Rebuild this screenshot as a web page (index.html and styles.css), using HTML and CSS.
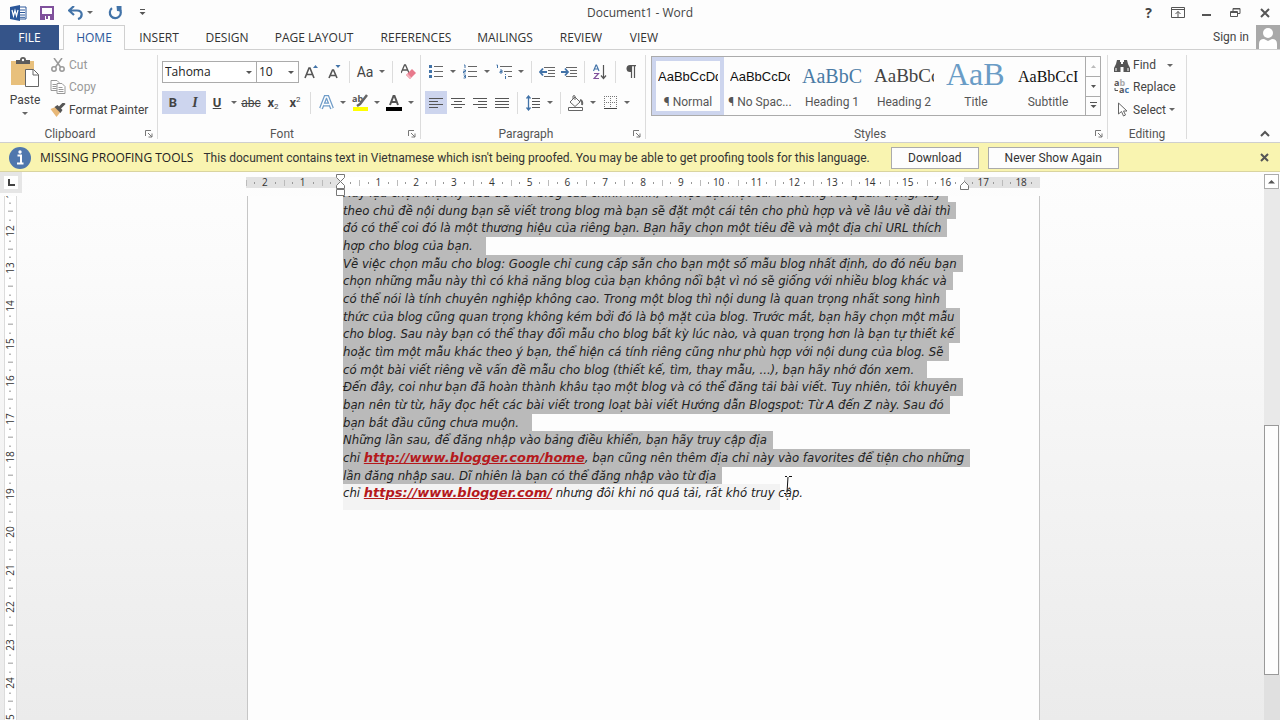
FILE: index.html
```html
<!DOCTYPE html>
<html lang="en">
<head>
<meta charset="utf-8">
<title>Document1 - Word</title>
<link rel="stylesheet" href="styles.css">
</head>
<body>
<div class="app">
<header class="titlebar">
  <div class="quick">
    <svg class="logo" width="17" height="16" viewBox="0 0 17 16" role="img" aria-label="Word"><path d="M8 2h8v12H8z" fill="#fff" stroke="#2b579a"/><path d="M10 5h5M10 7.500h5M10 10h5M10 12.300h5" stroke="#2b579a"/><path d="M0 2l10-2v16L0 14z" fill="#2b579a"/><path d="M2 5l1.500 6L5 5.500 6.500 11 8 5" fill="none" stroke="#fff" stroke-width="1.200"/></svg>
    <button aria-label="Save"><svg width="14" height="14" viewBox="0 0 14 14"><path d="M1 1h12v12H1z" fill="#fff" stroke="#80519c" stroke-width="2"/><path d="M1 8h12v5H1z" fill="#80519c"/><path d="M5 10h5v4H5z" fill="#fff"/><path d="M6 10h2v3H6z" fill="#80519c"/></svg></button>
    <button aria-label="Undo" class="undo"><svg width="16" height="14" viewBox="0 0 16 14"><path d="M6 0L1 4.500 6 9M1.500 4.500H9c6 0 6 7 1 8.500" fill="none" stroke="#4273a8" stroke-width="2.200"/></svg></button>
    <button class="arr" aria-label="Undo list"></button>
    <button aria-label="Repeat" class="redo"><svg width="15" height="14" viewBox="0 0 15 14"><path d="M4 2.200A5.500 5.500 0 1 0 11 2.500" fill="none" stroke="#4273a8" stroke-width="2.200"/><path d="M8.500 0h5v5.500L9 5z" fill="#4273a8"/></svg></button>
    <button aria-label="Customize"><svg width="7" height="7" viewBox="0 0 7 7"><path d="M1 .5h5" stroke="#555"/><path d="M.5 3h6l-3 3z" fill="#555"/></svg></button>
  </div>
  <h1>Document1 - Word</h1>
  <div class="window">
    <button aria-label="Help" class="help">?</button>
    <button aria-label="Ribbon display options"><svg width="14" height="11" viewBox="0 0 14 11" fill="none" stroke="#555"><path d="M.5.5h13v10H.5zM.5 2.500h13M7 10V4.500M4.500 7L7 4.500 9.500 7"/></svg></button>
    <button aria-label="Minimize"><svg width="10" height="10" viewBox="0 0 10 10"><path d="M0 7h9" stroke="#555" stroke-width="2"/></svg></button>
    <button aria-label="Restore"><svg width="11" height="11" viewBox="0 0 11 11" fill="none" stroke="#555"><path d="M.5 4.500h7v5h-7zM.5 5.500h7M3 4V1.500h7v5H8M3 2h7"/></svg></button>
    <button aria-label="Close"><svg width="10" height="10" viewBox="0 0 10 10"><path d="M1 1l8 8M9 1L1 9" stroke="#555" stroke-width="2"/></svg></button>
  </div>
</header>
<nav class="tabs">
  <button class="file">FILE</button>
  <button class="home">HOME</button>
  <button class="t3">INSERT</button>
  <button class="t4">DESIGN</button>
  <button class="t5">PAGE LAYOUT</button>
  <button class="t6">REFERENCES</button>
  <button class="t7">MAILINGS</button>
  <button class="t8">REVIEW</button>
  <button class="t9">VIEW</button>
  <a class="signin" href="#">Sign in</a>
  <svg class="avatar" width="24" height="24" viewBox="0 0 24 24" role="img" aria-label="Account"><path d="M0 0h24v24H0z" fill="#a9a9a9"/><circle cx="12" cy="8" r="5" fill="#fff"/><path d="M3 24v-5q0-5 5-5l4 2 4-2q5 0 5 5v5z" fill="#fff"/></svg>
</nav>
<section class="ribbon">
  <div class="group clip">
    <div class="body cliprow">
      <button class="paste"><svg width="30" height="31" viewBox="0 0 30 31"><path d="M1 4h23v24H1z" fill="#e8c07c"/><path d="M6 3h4q0-3 3-3t3 3h4v4H6z" fill="#5c5c5c"/><circle cx="13" cy="3" r="1.200" fill="#fff"/><path d="M15.500 12.500h8l5 5v12h-13z" fill="#fff" stroke="#666"/><path d="M23 12.500V18h5.500" fill="none" stroke="#666"/></svg><span>Paste</span><span class="tri"></span></button>
      <div class="cliplist">
        <button class="off"><svg width="14" height="14" viewBox="0 0 14 14" fill="none" stroke="#999" stroke-width="1.500"><path d="M3 0l6.500 9M11 0L4.500 9"/><circle cx="3" cy="11" r="2.200"/><circle cx="11" cy="11" r="2.200"/></svg>Cut</button>
        <button class="off"><svg width="15" height="14" viewBox="0 0 15 14" fill="#fff" stroke="#999"><path d="M.5.5h6l2 2v8h-8zM2 4.500h4M2 6.500h4M2 8.500h4"/><path d="M6.500 3.500h5l3 3v7h-8zM8 7.500h4M8 9.500h5M8 11.500h5"/></svg>Copy</button>
        <button><svg width="15" height="14" viewBox="0 0 15 14"><path d="M0 6l5-2 5 5-4 5z" fill="#e8b878"/><path d="M4 4l3-2 5 5-2 3z" fill="#555"/><path d="M8.500 5.500L14 0" stroke="#555" stroke-width="3"/></svg>Format Painter</button>
      </div>
    </div>
    <footer><span>Clipboard</span><button class="launch" aria-label="Clipboard settings"><svg width="8" height="8" viewBox="0 0 8 8" fill="none" stroke="#777"><path d="M.5 6V.5H6M3 3l4 4M7 3.500V7H3.500"/></svg></button></footer>
  </div>
  <div class="group font">
    <div class="body">
      <div class="row">
        <label class="combo face"><select aria-label="Font"><option>Tahoma</option></select></label>
        <label class="combo size"><select aria-label="Font size"><option>10</option></select></label>
        <button class="w24" aria-label="Grow font"><svg width="14" height="15" viewBox="0 0 14 15"><path d="M1 14L5 4h1l4 10M2.500 10.500h6" fill="none" stroke="#555" stroke-width="1.600"/><path d="M9 4l2.500-3L14 4z" fill="#4273a8"/></svg></button>
        <button class="w22" aria-label="Shrink font"><svg width="14" height="15" viewBox="0 0 14 15"><path d="M2 14L5.500 6h1L10 14M3.500 11.500h5" fill="none" stroke="#555" stroke-width="1.600"/><path d="M8.500 1h5L11 4z" fill="#4273a8"/></svg></button>
        <i class="sep"></i>
        <button class="w22 aa">Aa</button><button class="arr" aria-label="Change case"></button>
        <i class="sep"></i>
        <button class="w22" aria-label="Clear formatting"><svg width="15" height="16" viewBox="0 0 15 16"><path d="M0 9L3.500 1h1L8 9M1.500 6h5" fill="none" stroke="#555" stroke-width="1.300"/><path d="M5 11l6-6 4 4-6 6z" fill="#e8798c"/><path d="M5 11l1.500-1.500 4 4L9 15z" fill="#f3b0bb"/></svg></button>
      </div>
      <div class="row">
        <button class="w22 on b">B</button>
        <button class="w22 on it">I</button>
        <button class="w22 u">U</button><button class="arr" aria-label="Underline style"></button>
        <button class="w22 strike">abc</button>
        <button class="w22 x">x<sub>2</sub></button>
        <button class="w22 x">x<sup>2</sup></button>
        <i class="sep"></i>
        <button class="w22" aria-label="Text effects"><svg width="15" height="15" viewBox="0 0 15 15"><path d="M2 13.500L6.500 2h2L13 13.500M4.500 9.500h6" fill="none" stroke="#6f9cc8" stroke-width="4"/><path d="M2 13.500L6.500 2h2L13 13.500M4.500 9.500h6" fill="none" stroke="#fff" stroke-width="1.500"/></svg></button><button class="arr" aria-label="Effects list"></button>
        <button class="w22 hl" aria-label="Highlight"><svg width="17" height="17" viewBox="0 0 17 17"><text x="0" y="8" class="mini">ab</text><path d="M15 1L8 10l-3 2" stroke="#666" stroke-width="2.500" fill="none"/><path d="M1 13h15v4H1z" fill="#ff0"/></svg></button><button class="arr" aria-label="Highlight colours"></button>
        <button class="w22" aria-label="Font colour"><svg width="16" height="17" viewBox="0 0 16 17"><path d="M4 11L7.500 2h1L12 11M5 8h6" fill="none" stroke="#555" stroke-width="2"/><path d="M0 13h16v4H0z"/></svg></button><button class="arr" aria-label="Font colours"></button>
      </div>
    </div>
    <footer><span>Font</span><button class="launch" aria-label="Font settings"><svg width="8" height="8" viewBox="0 0 8 8" fill="none" stroke="#777"><path d="M.5 6V.5H6M3 3l4 4M7 3.500V7H3.500"/></svg></button></footer>
  </div>
  <div class="group para">
    <div class="body">
      <div class="row">
        <button class="w22" aria-label="Bullets"><svg width="14" height="15" viewBox="0 0 14 15"><path d="M0 1h3v3H0zM0 6h3v3H0zM0 11h3v3H0z" fill="#4273a8"/><path d="M5 2.500h9M5 7.500h9M5 12.500h9" stroke="#666"/></svg></button><button class="arr" aria-label="Bullet styles"></button>
        <button class="w22" aria-label="Numbering"><svg width="14" height="15" viewBox="0 0 14 15"><path d="M1 1h1v3M.5 6h2v1.500h-2V9h2M.5 11h2v1.500H1h1.500V14h-2" fill="none" stroke="#4273a8"/><path d="M5 2.500h9M5 7.500h9M5 12.500h9" stroke="#666"/></svg></button><button class="arr" aria-label="Number styles"></button>
        <button class="w22" aria-label="Multilevel list"><svg width="16" height="15" viewBox="0 0 16 15"><path d="M.5 1h1v3M4 6h2v3H4V7.500h2M9.500 10v1M9.500 12v3" fill="none" stroke="#4273a8"/><path d="M4 2.500h12M8 7.500h8M12 12.500h4" stroke="#666"/></svg></button><button class="arr" aria-label="List styles"></button>
        <i class="sep"></i>
        <button class="w22" aria-label="Decrease indent"><svg width="16" height="12" viewBox="0 0 16 12"><path d="M5 1.500h11M9 4.500h7M9 7.500h7M5 10.500h11" stroke="#666"/><path d="M4 2.500L1 6l3 3.500M1 6h7" fill="none" stroke="#4273a8" stroke-width="1.800"/></svg></button>
        <button class="w22" aria-label="Increase indent"><svg width="16" height="12" viewBox="0 0 16 12"><path d="M5 1.500h11M9 4.500h7M9 7.500h7M5 10.500h11" stroke="#666"/><path d="M4 2.500L7 6 4 9.500M0 6h7" fill="none" stroke="#4273a8" stroke-width="1.800"/></svg></button>
        <i class="sep"></i>
        <button class="w22" aria-label="Sort"><svg width="14" height="16" viewBox="0 0 14 16" fill="none"><path d="M.5 7L3 1h.5L6 7M1.500 5h4" stroke="#4273a8" stroke-width="1.200"/><path d="M1 9.500h4.500L1 14.500h5" stroke="#80519c" stroke-width="1.200"/><path d="M10.500 1v13M8 11.500l2.500 3 2.500-3" stroke="#555" stroke-width="1.200"/></svg></button>
        <i class="sep"></i>
        <button class="w22" aria-label="Show marks"><svg width="10" height="13" viewBox="0 0 10 13"><path d="M5 0H4a3.500 3.500 0 0 0 0 7h1z" fill="#555"/><path d="M4 .6h6M5.500 0v13M8.500 0v13" stroke="#555" stroke-width="1.200"/></svg></button>
      </div>
      <div class="row">
        <button class="w22 on" aria-label="Align left"><svg width="14" height="12" viewBox="0 0 14 12"><path d="M0 1.500h14M0 4.500h9M0 7.500h14M0 10.500h9" stroke="#555"/></svg></button>
        <button class="w22" aria-label="Centre"><svg width="14" height="12" viewBox="0 0 14 12"><path d="M0 1.500h14M3 4.500h8M0 7.500h14M3 10.500h8" stroke="#555"/></svg></button>
        <button class="w22" aria-label="Align right"><svg width="14" height="12" viewBox="0 0 14 12"><path d="M0 1.500h14M5 4.500h9M0 7.500h14M5 10.500h9" stroke="#555"/></svg></button>
        <button class="w22" aria-label="Justify"><svg width="14" height="12" viewBox="0 0 14 12"><path d="M0 1.500h14M0 4.500h14M0 7.500h14M0 10.500h14" stroke="#555"/></svg></button>
        <i class="sep"></i>
        <button class="w22" aria-label="Line spacing"><svg width="14" height="16" viewBox="0 0 14 16"><path d="M6 3.500h8M6 6.500h8M6 9.500h8M6 12.500h8" stroke="#555"/><path d="M2.500 1v14M.5 3.500l2-2.500 2 2.500M.5 12.500l2 2.500 2-2.500" fill="none" stroke="#4273a8" stroke-width="1.300"/></svg></button><button class="arr" aria-label="Line spacing list"></button>
        <i class="sep"></i>
        <button class="w22" aria-label="Shading"><svg width="18" height="16" viewBox="0 0 18 16" fill="none" stroke="#666"><path d="M1.500 12.500h14v3h-14z" fill="#fff"/><path d="M3 7l5-5 5 5-5 4.500z M6 4V1q1.500-1 2 0v4"/><path d="M13 5q3 1 2 5" stroke-width="2"/></svg></button><button class="arr" aria-label="Shading colours"></button>
        <button class="w22" aria-label="Borders"><svg width="13" height="13" viewBox="0 0 13 13" stroke="#777"><path d="M.5 0v13M6.500 0v13M12.500 0v13M0 .5h13M0 6.500h13" stroke-dasharray="1 1"/><path d="M0 12.500h13" stroke="#444"/></svg></button><button class="arr" aria-label="Border styles"></button>
      </div>
    </div>
    <footer><span>Paragraph</span><button class="launch" aria-label="Paragraph settings"><svg width="8" height="8" viewBox="0 0 8 8" fill="none" stroke="#777"><path d="M.5 6V.5H6M3 3l4 4M7 3.500V7H3.500"/></svg></button></footer>
  </div>
  <div class="group styles">
    <div class="gallery">
      <button class="style cur"><b class="sans">AaBbCcDd</b><span>¶ Normal</span></button>
      <button class="style"><b class="sans">AaBbCcDd</b><span>¶ No Spac...</span></button>
      <button class="style"><b class="h1">AaBbC</b><span>Heading 1</span></button>
      <button class="style"><b class="h2">AaBbCc</b><span>Heading 2</span></button>
      <button class="style"><b class="ttl">AaB</b><span>Title</span></button>
      <button class="style"><b class="subt">AaBbCcI</b><span>Subtitle</span></button>
      <div class="gscroll">
        <button aria-label="Previous styles"><svg width="7" height="5" viewBox="0 0 7 5"><path d="M1 4h5L3.500 1z" fill="#bbb"/></svg></button>
        <button aria-label="Next styles"><svg width="7" height="5" viewBox="0 0 7 5"><path d="M1 1h5L3.500 4z" fill="#555"/></svg></button>
        <button aria-label="More styles"><svg width="7" height="7" viewBox="0 0 7 7"><path d="M0 .5h7" stroke="#555"/><path d="M.5 3h6l-3 3z" fill="#555"/></svg></button>
      </div>
    </div>
    <footer><span>Styles</span><button class="launch" aria-label="Style settings"><svg width="8" height="8" viewBox="0 0 8 8" fill="none" stroke="#777"><path d="M.5 6V.5H6M3 3l4 4M7 3.500V7H3.500"/></svg></button></footer>
  </div>
  <div class="group edit">
    <div class="body cliplist">
      <button><svg width="16" height="13" viewBox="0 0 16 13" fill="#555"><path d="M3 1h3v2h1v2h2V3h1V1h3l1 4 2 4v4H9.500V8h-3v5H0V9l2-4z"/><path d="M2 9v3M14 9v3" stroke="#fff"/></svg>Find<span class="tri far"></span></button>
      <button><svg width="16" height="15" viewBox="0 0 16 15"><text x="0" y="7" class="mini">a<tspan fill="#aaa">b</tspan></text><text x="5" y="14" class="mini">a<tspan fill="#4273a8">c</tspan></text><path d="M1 9v2.500h3" fill="none" stroke="#555"/></svg>Replace</button>
      <button><svg width="16" height="15" viewBox="0 0 16 15"><path d="M4.500 1v11l3-2.500 2 4.500 2-1-2-4h3.500z" fill="#fff" stroke="#666"/></svg>Select<span class="tri"></span></button>
    </div>
    <footer><span>Editing</span></footer>
  </div>
  <button class="collapse" aria-label="Collapse ribbon"><svg width="10" height="7" viewBox="0 0 10 7"><path d="M1 6l4-4 4 4" fill="none" stroke="#555" stroke-width="2"/></svg></button>
</section>
<section class="notice">
  <svg width="22" height="22" viewBox="0 0 22 22" aria-hidden="true"><circle cx="11" cy="11" r="11" fill="#4f77ad"/><circle cx="11" cy="5" r="1.700" fill="#fff"/><path d="M8.500 8.500H12V16M8 16.500h6.500" stroke="#fff" stroke-width="2" fill="none"/></svg>
  <strong>MISSING PROOFING TOOLS</strong>
  <p>This document contains text in Vietnamese which isn't being proofed. You may be able to get proofing tools for this language.</p>
  <button class="act dl">Download</button>
  <button class="act ns">Never Show Again</button>
  <button class="x" aria-label="Dismiss"><svg width="9" height="9" viewBox="0 0 9 9"><path d="M1 1l7 7M8 1L1 8" stroke="#555" stroke-width="2"/></svg></button>
</section>
<main class="work">
  <div class="corner"><button aria-label="Tab stop"><svg width="7" height="7" viewBox="0 0 7 7"><path d="M1 0v6h6" fill="none" stroke="#444" stroke-width="2"/></svg></button></div>
  <div class="rulerbar">
    <div class="hruler">
      <i>2</i><i>1</i><i></i><i>1</i><i>2</i><i>3</i><i>4</i><i>5</i><i>6</i><i>7</i><i>8</i><i>9</i><i>10</i><i>11</i><i>12</i><i>13</i><i>14</i><i>15</i><i>16</i><i>17</i><i>18</i>
      <svg class="mark left" width="9" height="22" viewBox="0 0 9 22" fill="#fff" stroke="#777"><path d="M.5.5h8v3l-4 4-4-4zM.5 14.500v-3l4-4 4 4v3zM.5 15.500h8v6h-8z"/></svg>
      <svg class="mark right" width="9" height="9" viewBox="0 0 9 9" fill="#fff" stroke="#777"><path d="M.5 8.500v-4l4-4 4 4v4z"/></svg>
    </div>
  </div>
  <div class="scroll">
    <button aria-label="Scroll up"><svg width="7" height="5" viewBox="0 0 7 5"><path d="M0 4.500h7L3.500 1z" fill="#555"/></svg></button>
    <div class="before"></div><div class="thumb"></div><div class="after"></div>
  </div>
  <div class="vside"><div class="vruler"><i>11</i><i>12</i><i>13</i><i>14</i><i>15</i><i>16</i><i>17</i><i>18</i><i>19</i><i>20</i><i>21</i><i>22</i><i>23</i><i>24</i><i>25</i></div></div>
  <div class="canvas">
    <article class="page" lang="vi">
      <p>Hãy lựa chọn thật kỹ tiêu đề cho blog của chính mình, vì việc đặt một cái tên cũng rất quan trọng, tùy</p>
      <p>theo chủ đề nội dung bạn sẽ viết trong blog mà bạn sẽ đặt một cái tên cho phù hợp và về lâu về dài thì</p>
      <p>đó có thể coi đó là một thương hiệu của riêng bạn. Bạn hãy chọn một tiêu đề và một địa chỉ URL thích</p>
      <p class="end">hợp cho blog của bạn.</p>
      <p>Về việc chọn mẫu cho blog: Google chỉ cung cấp sẵn cho bạn một số mẫu blog nhất định, do đó nếu bạn</p>
      <p>chọn những mẫu này thì có khả năng blog của bạn không nổi bật vì nó sẽ giống với nhiều blog khác và</p>
      <p>có thể nói là tính chuyên nghiệp không cao. Trong một blog thì nội dung là quan trọng nhất song hình</p>
      <p>thức của blog cũng quan trọng không kém bởi đó là bộ mặt của blog. Trước mắt, bạn hãy chọn một mẫu</p>
      <p>cho blog. Sau này bạn có thể thay đổi mẫu cho blog bất kỳ lúc nào, và quan trọng hơn là bạn tự thiết kế</p>
      <p>hoặc tìm một mẫu khác theo ý bạn, thể hiện cá tính riêng cũng như phù hợp với nội dung của blog. Sẽ</p>
      <p class="end">có một bài viết riêng về vấn đề mẫu cho blog (thiết kế, tìm, thay mẫu, ...), bạn hãy nhớ đón xem.</p>
      <p>Đến đây, coi như bạn đã hoàn thành khâu tạo một blog và có thể đăng tải bài viết. Tuy nhiên, tôi khuyên</p>
      <p>bạn nên từ từ, hãy đọc hết các bài viết trong loạt bài viết Hướng dẫn Blogspot: Từ A đến Z này. Sau đó</p>
      <p class="end">bạn bắt đầu cũng chưa muộn.</p>
      <p>Những lần sau, để đăng nhập vào bảng điều khiển, bạn hãy truy cập địa</p>
      <p>chỉ <a href="#">http://www.blogger.com/home</a>, bạn cũng nên thêm địa chỉ này vào favorites để tiện cho những</p>
      <p>lần đăng nhập sau. Dĩ nhiên là bạn có thể đăng nhập vào từ địa</p>
      <p class="last">chỉ <a href="#">https://www.blogger.com/</a> nhưng đôi khi nó quá tải, rất khó truy cập.</p>
      <svg class="ibeam" width="8" height="18" viewBox="0 0 8 18" fill="none" stroke="#111"><path d="M1 .5h2M5 .5h3M4 1L3 16.500M0 17.500h2M4 17.500h2"/></svg>
    </article>
  </div>
</main>
</div>
</body>
</html>
```
FILE: styles.css
```css
* { box-sizing: border-box; }
body { margin: 0; background: #fdfdfd; color: #444; font: 12px/16px "Open Sans", "Noto Sans", sans-serif; }
button { border: 0; padding: 0; margin: 0; background: none; font: inherit; color: inherit; display: flex; align-items: center; justify-content: center; flex: none; }
h1, p { margin: 0; font-weight: 400; font-size: inherit; }
svg { display: block; flex: none; }
.app { height: 100vh; display: flex; flex-direction: column; overflow: hidden; }

.titlebar { height: 25px; flex: none; display: grid; grid-template-columns: 1fr auto 1fr; align-items: center; }
.quick { display: flex; align-items: center; padding-left: 10px; height: 22px; }
.quick button { height: 22px; }
.logo { margin-right: 13px; }
.undo { margin-left: 14px; }
.redo { margin: 0 16px 0 12px; }
.window { display: flex; justify-content: flex-end; align-items: center; padding-right: 10px; height: 22px; }
.window button { width: 29px; }
.window button:last-child { width: 10px; margin-left: 10px; }
.help { font-weight: 700; font-size: 14px; }
.arr { width: 12px; height: 23px; }
.arr::after, .tri { content: ""; border: 3px solid transparent; border-top-color: #666; border-bottom: 0; }

.tabs { height: 25px; flex: none; display: flex; border-bottom: 1px solid #d0d0d0; }
.tabs button { color: #333; height: 25px; }
.tabs .file { width: 59px; background: #355489; color: #fff; }
.tabs .home { width: 62px; margin: 0 10px 0 4px; border: 1px solid #d0d0d0; border-bottom: 0; background: #fdfdfd; color: #2b579a; }
.t3 { width: 48px; }
.t4 { width: 48px; margin-left: 20px; }
.t5 { width: 86px; margin-left: 20px; }
.t6 { width: 74px; margin-left: 22px; }
.t7 { width: 60px; margin-left: 22px; }
.t8 { width: 46px; margin-left: 23px; }
.t9 { width: 34px; margin-left: 23px; }
.signin { margin-left: auto; margin-right: 7px; color: #444; text-decoration: none; line-height: 24px; font-family: Roboto, sans-serif; }

.ribbon { height: 93px; flex: none; display: flex; padding-top: 5px; border-bottom: 1px solid #cfcfcf; font-family: Roboto, sans-serif; }
.group { height: 84px; border-right: 1px solid #dcdcdc; display: flex; flex-direction: column; }
.group footer { height: 11px; margin-top: auto; display: flex; align-items: center; }
.group footer span { flex: 1; text-align: center; color: #555; padding-right: 6px; }
.launch { width: 8px; margin-right: 4px; }
.clip { width: 158px; }
.clip footer span { padding-right: 5px; }
.font { width: 263px; padding-left: 4px; }
.para { width: 225px; padding-left: 4px; }
.styles { width: 462px; padding-left: 5px; }
.edit { width: 79px; padding-left: 6px; }
.collapse { margin-left: auto; width: 30px; height: 18px; align-self: flex-end; }

.cliprow { display: flex; }
.paste { width: 50px; flex-direction: column; justify-content: flex-start; padding-top: 2px; }
.paste span { margin-top: 4px; }
.cliplist button { height: 23px; gap: 3px; white-space: nowrap; justify-content: flex-start; }
.cliplist svg { width: 16px; }
.cliplist button:first-child { height: 20px; }
.off { color: #999; }
.far { margin-left: 8px; }

.row { display: flex; align-items: center; height: 23px; margin-top: 5px; }
.row + .row { margin-top: 8px; }
.row button { height: 23px; }
.w22 { width: 22px; }
.w24 { width: 24px; }
.sep { width: 1px; height: 22px; background: #dcdcdc; margin: 0 4px; flex: none; }
.on { background: #cdd5ee; }
.b, .x { font-weight: 700; font-size: 13px; }
.x sub, .x sup { font-size: 8px; line-height: 8px; font-weight: 400; }
.x sub { margin-top: 8px; }
.x sup { margin-bottom: 6px; }
.it { font: italic 700 14px "Liberation Serif", serif; }
.u { font-weight: 700; font-size: 13px; text-decoration: underline; }
.strike { text-decoration: line-through; }
.aa { font-size: 14px; }
.mini { font: 700 9px "Open Sans", sans-serif; fill: #555; }
.combo { height: 22px; border: 1px solid #ababab; display: flex; position: relative; background: #fff; font-family: "Open Sans", sans-serif; }
.combo::after { content: ""; position: absolute; right: 4px; top: 9px; border: 3px solid transparent; border-top-color: #555; border-bottom: 0; }
.combo select { appearance: none; border: 0; background: none; width: 100%; padding: 0 2px; font: inherit; color: #222; }
.face { width: 95px; }
.size { width: 43px; margin-left: -1px; }

.gallery { flex: none; display: flex; height: 60px; margin: 1px 6px 0 0; border: 1px solid #ababab; }
.style { width: 72px; flex-direction: column; border: 4px solid transparent; justify-content: flex-start; }
.cur { border-color: #cdd5ee; }
.style b { width: 60px; height: 32px; overflow: hidden; white-space: nowrap; font-weight: 400; color: #111; text-align: left; }
.style span { line-height: 18px; white-space: nowrap; color: #555; }
.style .sans { font: 13px/32px "Liberation Sans", sans-serif; }
.style .h1 { font: 20px/30px "Liberation Serif", serif; color: #4a7ba5; }
.style .h2 { font: 19px/30px "Liberation Serif", serif; color: #444; }
.style .ttl { font: 32px/26px "Liberation Serif", serif; color: #6a9cc6; }
.style .subt { font: 16px/32px "Liberation Serif", serif; }
.gscroll { margin-left: auto; width: 15px; border-left: 1px solid #ababab; display: grid; grid-template-rows: 1fr 1fr 1fr; }
.gscroll button + button { border-top: 1px solid #ababab; }

.notice { height: 29px; flex: none; background: #f9f4b0; border-bottom: 1px solid #d9d4a0; display: flex; align-items: center; padding: 1px 11px 0 9px; color: #333; white-space: nowrap; font-family: Roboto, sans-serif; }
.notice strong { font-weight: 400; color: #222; margin: 0 10px 0 9px; font-family: "Open Sans", sans-serif; }
.notice p { margin-right: 21px; }
.act { height: 22px; border: 1px solid #ababab; background: #fdfdfd; }
.dl { width: 88px; margin-right: 9px; }
.ns { width: 131px; }
.notice .x { margin-left: auto; }

.work { flex: 1; min-height: 0; display: grid; grid-template: 24px 1fr / 22px 1fr 16px; background: linear-gradient(#fdfdfd, #fbfbfb 15%, #ebebeb); }
.corner { background: #e6e6e6; height: 21px; padding: 4px; }
.corner button { background: #fff; width: 14px; height: 13px; }
.rulerbar { display: flex; justify-content: center; align-items: flex-start; padding-top: 5px; }
.hruler { width: 794px; height: 11px; display: grid; grid-template-columns: repeat(21, 1fr); background: linear-gradient(90deg, #e2e2e2 95px, #fff 95px, #fff 718px, #e2e2e2 718px); position: relative; }
.hruler i, .vruler i { font: 10px/11px "Open Sans", sans-serif; color: #333; text-align: center; }
.hruler i { background: linear-gradient(#bbb, #bbb) 0 50% / 1px 6px no-repeat, linear-gradient(#999, #999) 22% 50% / 1px 2px no-repeat, linear-gradient(#999, #999) 78% 50% / 1px 2px no-repeat; }
.mark { position: absolute; }
.left { left: 90px; top: -3px; }
.right { left: 714px; top: 4px; }
.scroll { grid-column: 3; grid-row: 1 / 3; display: flex; flex-direction: column; padding-top: 2px; }
.scroll button { width: 15px; height: 15px; border: 1px solid #ababab; background: #fff; }
.before { flex: 237; background: #e9e9e9; }
.thumb { flex: 249; background: #fdfdfd; border: 1px solid #999; width: 15px; }
.after { flex: 45; background: #e0e0e0; }
.vside { overflow: hidden; padding-left: 4px; }
.vruler { margin-top: -23px; width: 13px; height: 567px; display: grid; grid-template-rows: repeat(15, 1fr); background: #fff; border: 1px solid #dcdcdc; }
.vruler i { writing-mode: vertical-rl; transform: rotate(180deg); width: 11px; background: linear-gradient(#999, #999) 50% 0 / 5px 1px no-repeat, linear-gradient(#999, #999) 50% 22% / 2px 1px no-repeat, linear-gradient(#999, #999) 50% 78% / 2px 1px no-repeat; }
.canvas { overflow: hidden; display: flex; justify-content: center; padding-left: 1px; }
.page { width: 793px; background: #fdfdfd; border: solid #c6c6c6; border-width: 0 1px; padding-left: 95px; display: flex; flex-direction: column; align-items: flex-start; position: relative; font: italic 13px/1.36 "DejaVu Sans Condensed", "DejaVu Sans", sans-serif; color: #222; }
.page p { background: #bababa; white-space: nowrap; padding-right: 6px; flex: none; }
.page p:first-child { margin-top: -12px; }
.page .end { padding-right: 13px; }
.page .last { background: #f3f3f3; width: 437px; height: 26px; padding: 0; }
.page a { color: #b5191c; font: italic 700 13px/1 "DejaVu Sans", sans-serif; }
.ibeam { position: absolute; left: 536px; top: 280px; }
```
